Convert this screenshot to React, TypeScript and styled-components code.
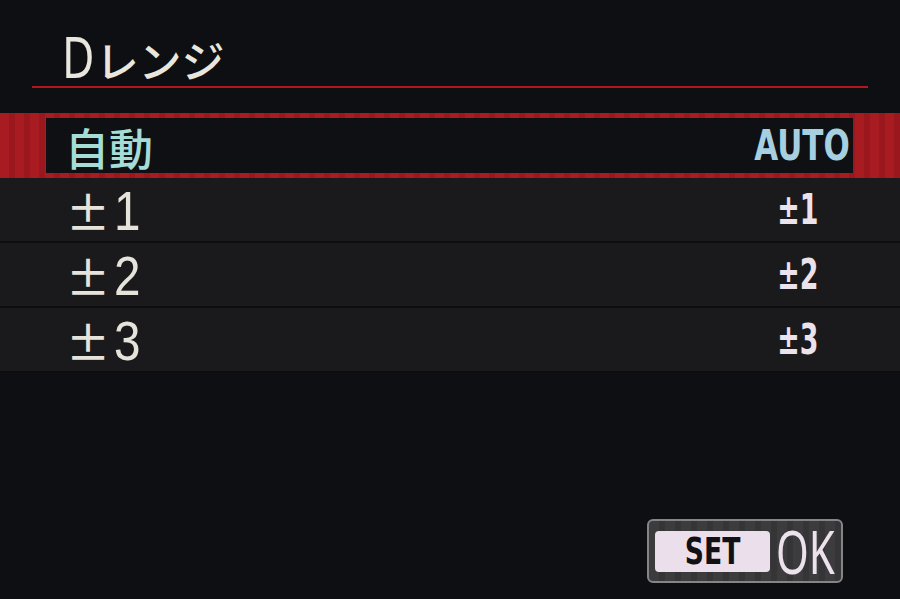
import React from "react";
import styled, { createGlobalStyle } from "styled-components";

const Global = createGlobalStyle`
  html, body { margin: 0; padding: 0; background: #0e0f13; }
  #root { width: 900px; height: 599px; }
`;

const Screen = styled.div`
  width: 900px;
  height: 599px;
  background: #0e0f13;
  display: flex;
  flex-direction: column;
  overflow: hidden;
  font-family: "Noto Sans CJK JP", "Noto Sans", sans-serif;
`;

const Header = styled.div`
  margin: 0 32px;
  height: 88px;
  border-bottom: 2px solid #b3171d;
  display: flex;
  align-items: flex-end;
  padding-left: 30px;
  padding-bottom: 4px;
  box-sizing: border-box;
`;

const Title = styled.div`
  font-size: 43px;
  font-weight: 500;
  line-height: 1;
  color: #e9e7dd;
  display: flex;
  align-items: baseline;
  white-space: nowrap;
`;

const Narrow = styled.span<{ $sx: number; $origin?: string }>`
  display: inline-block;
  transform: scaleX(${(p) => p.$sx});
  transform-origin: ${(p) => p.$origin ?? "left"} center;
`;

const TitleD = styled(Narrow)`
  font-family: "Noto Sans", sans-serif;
  font-weight: 400;
  font-size: 57px;
  line-height: 0.9;
  margin-right: -8px;
`;

const List = styled.div`
  margin-top: 25px;
  display: flex;
  flex-direction: column;
`;

const SelectedRow = styled.div`
  height: 65px;
  box-sizing: border-box;
  padding: 5px 47px 5px 46px;
  background: repeating-linear-gradient(
    90deg,
    #a81b21 0px,
    #a81b21 9px,
    #9a181d 9px,
    #9a181d 15px
  );
  display: flex;
`;

const SelectedInner = styled.div`
  flex: 1;
  background: #0f1014;
  display: flex;
  align-items: center;
  justify-content: space-between;
  padding: 0 3px 0 19px;
`;

const Row = styled.div`
  height: 65px;
  box-sizing: border-box;
  background: #1a1a1d;
  border-bottom: 2px solid #0c0d10;
  display: flex;
  align-items: center;
  justify-content: space-between;
  padding: 0 82px 0 66px;
`;

const LabelJP = styled.div<{ $color: string }>`
  font-size: 44px;
  font-weight: 500;
  line-height: 1;
  color: ${(p) => p.$color};
  margin-top: 2px;
`;

const LabelNum = styled.div`
  display: flex;
  align-items: baseline;
  color: #e6e4da;
  line-height: 0.8;
  margin-top: 4px;
`;

const PlusMinus = styled.span`
  font-family: "Noto Sans CJK JP", sans-serif;
  font-size: 44px;
  font-weight: 500;
  margin-right: 4px;
`;

const Digit = styled(Narrow)`
  font-family: "Liberation Sans", sans-serif;
  font-size: 56px;
  line-height: 0.8;
`;

const Value = styled.div<{ $color: string; $size: number }>`
  font-family: "DejaVu Sans", sans-serif;
  font-weight: bold;
  font-size: ${(p) => p.$size}px;
  line-height: 1;
  color: ${(p) => p.$color};
`;

const Footer = styled.div`
  margin-top: auto;
  display: flex;
  justify-content: flex-end;
  padding: 0 57px 16px 0;
`;

const OkButton = styled.div`
  width: 196px;
  height: 64px;
  box-sizing: border-box;
  border: 2px solid #858487;
  border-radius: 6px;
  background: repeating-linear-gradient(
    90deg,
    #3c3b3e 0px,
    #3c3b3e 10px,
    #353437 10px,
    #353437 16px
  );
  display: flex;
  align-items: center;
  padding: 0 6px;
`;

const SetKey = styled.div`
  flex-shrink: 0;
  width: 115px;
  height: 41px;
  border-radius: 4px;
  background: #ebdfeb;
  display: flex;
  align-items: center;
  justify-content: center;
  margin-right: 6px;
`;

const SetText = styled(Narrow)`
  font-family: "DejaVu Sans", sans-serif;
  font-weight: bold;
  font-size: 37px;
  line-height: 1;
  color: #111014;
`;

const OkText = styled(Narrow)`
  font-family: "Noto Sans", sans-serif;
  font-size: 60px;
  line-height: 1;
  color: #ece2ec;
`;

const rows = ["1", "2", "3"];

export default function App() {
  return (
    <>
      <Global />
      <Screen>
        <Header>
          <Title>
            <TitleD $sx={0.78}>D</TitleD>
            <span>レンジ</span>
          </Title>
        </Header>
        <List>
          <SelectedRow>
            <SelectedInner>
              <LabelJP $color="#a6dcd6">自動</LabelJP>
              <Value $color="#a6cfe0" $size={43}>
                <Narrow $sx={0.72} $origin="right">AUTO</Narrow>
              </Value>
            </SelectedInner>
          </SelectedRow>
          {rows.map((r) => (
            <Row key={r}>
              <LabelNum>
                <PlusMinus>±</PlusMinus>
                <Digit $sx={0.85}>{r}</Digit>
              </LabelNum>
              <Value $color="#ece2ec" $size={42}>
                <Narrow $sx={0.64} $origin="right">±{r}</Narrow>
              </Value>
            </Row>
          ))}
        </List>
        <Footer>
          <OkButton>
            <SetKey>
              <SetText $sx={0.72} $origin="center">SET</SetText>
            </SetKey>
            <OkText $sx={0.7}>OK</OkText>
          </OkButton>
        </Footer>
      </Screen>
    </>
  );
}
